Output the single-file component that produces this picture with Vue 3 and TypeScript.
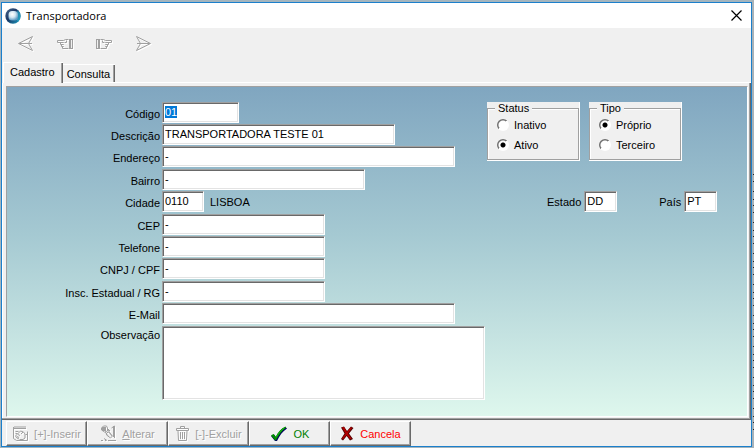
<script setup lang="ts">
import { onMounted, ref } from 'vue'

interface Field {
  id: string
  label: string
  size: string
}

const fields: Field[] = [
  { id: 'codigo', label: 'Código', size: 'w-code' },
  { id: 'descricao', label: 'Descrição', size: 'w-desc' },
  { id: 'endereco', label: 'Endereço', size: 'w-full' },
  { id: 'bairro', label: 'Bairro', size: 'w-bairro' },
  { id: 'cidade', label: 'Cidade', size: 'w-city' },
  { id: 'cep', label: 'CEP', size: 'w-mid' },
  { id: 'telefone', label: 'Telefone', size: 'w-mid' },
  { id: 'cnpj', label: 'CNPJ / CPF', size: 'w-mid' },
  { id: 'insc', label: 'Insc. Estadual / RG', size: 'w-mid' },
  { id: 'email', label: 'E-Mail', size: 'w-full' },
]

const form = ref<Record<string, string>>({
  codigo: '01',
  descricao: 'TRANSPORTADORA TESTE 01',
  endereco: '-',
  bairro: '-',
  cidade: '0110',
  cep: '-',
  telefone: '-',
  cnpj: '-',
  insc: '-',
  email: '',
  obs: '',
  estado: 'DD',
  pais: 'PT',
})
const status = ref('Ativo')
const tipo = ref('Próprio')
const activeTab = ref('Cadastro')

onMounted(() => {
  const first = document.getElementById('codigo') as HTMLInputElement | null
  first?.focus()
  first?.select()
})
</script>

<template>
  <div class="desktop">
    <main class="window">
      <header class="titlebar">
        <svg class="app-icon" width="16" height="16" viewBox="0 0 16 16" aria-hidden="true">
          <defs>
            <linearGradient id="ring" x1="0" y1="0" x2="1" y2="1">
              <stop offset="0" stop-color="#4b6a8c" />
              <stop offset=".45" stop-color="#1a3564" />
              <stop offset="1" stop-color="#1ba3c6" />
            </linearGradient>
            <radialGradient id="core" cx=".4" cy=".35" r=".65">
              <stop offset="0" stop-color="#ffffff" />
              <stop offset=".5" stop-color="#d4e6f1" />
              <stop offset="1" stop-color="#5f9cc4" />
            </radialGradient>
          </defs>
          <circle cx="8" cy="8" r="7.7" fill="url(#ring)" />
          <path d="M12.500 2a7.700 7.700 0 0 1 .5 11.800L11 11l1-6z" fill="#28a5c5" opacity=".7" />
          <rect x="3.500" y="3" width="9.500" height="9.500" rx="3.500" fill="url(#core)" />
        </svg>
        <h1>Transportadora</h1>
        <button class="close" type="button" aria-label="Fechar">
          <svg width="11" height="11" viewBox="0 0 11 11"><path d="M.5.5l10 10M10.500.5l-10 10" stroke="#000" stroke-width="1.200" fill="none" /></svg>
        </button>
      </header>

      <nav class="toolbar">
        <button type="button" disabled aria-label="Primeiro">
          <svg width="18" height="17" viewBox="0 0 18 17"><path d="M15.500 1.500L1.500 8.500l14 7-4-7zM2 8.500h13" /></svg>
        </button>
        <button type="button" disabled aria-label="Anterior">
          <svg width="18" height="17" viewBox="0 0 18 17"><path d="M12.500 4.500h-3l-2 1h-6v2h6M7.500 7.500h-3v2h3M7.500 9.500h-2v2h2M7.500 11.500h-1v2h6M8.500 7.500h2v-2" /><path d="M13 4h4v10h-4z" class="solid" /><path d="M15.500 5v8" class="light" /></svg>
        </button>
        <button type="button" disabled aria-label="Próximo">
          <svg width="18" height="17" viewBox="0 0 18 17"><path d="M5.500 4.500h3l2 1h6v2h-6M10.500 7.500h3v2h-3M10.500 9.500h2v2h-2M10.500 11.500h1v2h-6M9.500 7.500h-2v-2" /><path d="M1 4h4v10H1z" class="solid" /><path d="M2.500 5v8" class="light" /></svg>
        </button>
        <button type="button" disabled aria-label="Último">
          <svg width="18" height="17" viewBox="0 0 18 17"><path d="M2.500 1.500l14 7-14 7 4-7zM16 8.500H3" /></svg>
        </button>
      </nav>

      <div class="tabs" role="tablist">
        <button
          v-for="tab in ['Cadastro', 'Consulta']"
          :key="tab"
          type="button"
          role="tab"
          class="tab"
          :class="{ active: tab === activeTab }"
          :aria-selected="tab === activeTab"
          @click="activeTab = tab"
        >{{ tab }}</button>
        <span class="tab-line"></span>
      </div>

      <section class="page">
        <form class="panel" @submit.prevent>
          <div class="fields">
            <template v-for="f in fields" :key="f.id">
              <label :for="f.id">{{ f.label }}</label>
              <div class="cell">
                <input :id="f.id" v-model="form[f.id]" class="box" :class="f.size" type="text" autocomplete="off" />
                <span v-if="f.id === 'cidade'" class="city">LISBOA</span>
              </div>
            </template>
            <label for="obs" class="obs-label">Observação</label>
            <textarea id="obs" v-model="form.obs" class="box"></textarea>
          </div>

          <div class="side">
            <div class="groups">
              <div class="group">
                <fieldset>
                  <legend>Status</legend>
                  <label v-for="o in ['Inativo', 'Ativo']" :key="o"><input v-model="status" type="radio" name="status" :value="o" />{{ o }}</label>
                </fieldset>
              </div>
              <div class="group">
                <fieldset>
                  <legend>Tipo</legend>
                  <label v-for="o in ['Próprio', 'Terceiro']" :key="o"><input v-model="tipo" type="radio" name="tipo" :value="o" />{{ o }}</label>
                </fieldset>
              </div>
            </div>
            <div class="region">
              <label for="estado">Estado</label>
              <input id="estado" v-model="form.estado" class="box w-short" type="text" />
              <label for="pais" class="pais">País</label>
              <input id="pais" v-model="form.pais" class="box w-short" type="text" />
            </div>
          </div>
        </form>
      </section>

      <footer class="actions">
        <button type="button" disabled>
          <svg class="gray" width="17" height="17" viewBox="0 0 17 17"><path d="M1.500 2v11.500l3 2h11v-9M1 2.500h1M3 1v3M5 1v3M7 1v3M9 1v3M11 1v3M13 1v3M1 3.500h13M3.500 6.500h3M3.500 8.500h2M5 13l-1.500-2 5-5 3 1 1.500 2v4l-2 1.500H7.500M6 9.500l2 1M5 11.500l2 1M9 9l2-2M13.500 9.500h2M7 14l-2-1" /></svg>
          <span>[+]-Inserir</span>
        </button>
        <button type="button" disabled class="wide-gap">
          <svg class="gray" width="17" height="17" viewBox="0 0 17 17"><path d="M1.500 3l2-2h3l1 2v3l-3 1-3-2zM7 3l3 3M5 7l4 5M8 5l4 6M13.500 1v11M11.500 3l3-2v12M6.500 8l2-1 4 4-2 2-4-3zM1 15.500h2M5 15.500h1M8 15.500h8M4 13.500l3 2" /><path d="M2 2h4v4H2z" class="solid" /></svg>
          <span><u>A</u>lterar</span>
        </button>
        <button type="button" disabled>
          <svg class="gray" width="15" height="17" viewBox="0 0 15 17"><path d="M5.500 3V1.500h4V3M1.500 3.500h12v2h-12zM3 6l.5 9.500h8L12 6M5.500 7v7M7.500 7v7M9.500 7v7" /></svg>
          <span><u>[</u>-]-Excluir</span>
        </button>
        <button type="button" class="ok">
          <svg width="18" height="16" viewBox="0 0 18 16"><path d="M1 10l3-1.500 2 2.500C8 7 11 3 15.500 1L17 2.500C12.500 5.500 9.500 9.500 7 15H5z" fill="#000060" /><path d="M1 9.200L3.700 8l2 3C8 6 11 2.500 15.500.500L16 1.700C12 4.500 9 8.500 6 14.200H5z" fill="#008c00" /><path d="M6 11.500C8 8 11 4 14.500 2" stroke="#18b818" fill="none" /></svg>
          <span>OK</span>
        </button>
        <button type="button" class="cancel">
          <svg width="14" height="15" viewBox="0 0 14 15"><path d="M1 1.500L4 .5l3 4.500L11 .5l2.500 1.500L9 7.500l4 5.500-3 1.500L6.700 10 3 14.500 1 13l3.500-5.500z" fill="#500" /><path d="M2 1.500l2-.5 3 5L11 1l1 1-4.200 5.500L11.500 12.500l-1.500.8L6.700 9 3 13.200 2 12.500l3.500-5z" fill="#b00000" /></svg>
          <span>Cancela</span>
        </button>
      </footer>
    </main>
    <svg class="behind" width="2" height="448" viewBox="0 0 2 448" aria-hidden="true">
      <path d="M0 0h2v448H0z" fill="#a8b2b8" />
      <path d="M1.500 174v260" stroke="#222" stroke-dasharray="1 6 1 9 1 7 1 5" fill="none" />
    </svg>
  </div>
</template>

<style>
body {
  background: #a4b5be;
  overflow: hidden;
}
</style>

<style scoped>
* {
  box-sizing: border-box;
}
.desktop {
  display: flex;
  min-height: 100vh;
  padding: 2px 0 1px 1px;
  overflow: hidden;
  font: 11px/14px "Liberation Sans", Arial, sans-serif;
  color: #000;
}
.window {
  flex: 1;
  min-width: 0;
  display: flex;
  flex-direction: column;
  border: 1px solid #1b7fcc;
  background: #f0f0f0;
}
.behind {
  flex: none;
  width: 2px;
  margin: -2px 0 -1px;
}
button {
  font: inherit;
  margin: 0;
  padding: 0;
  border: 0;
  border-radius: 0;
  background: none;
  color: inherit;
}
svg {
  display: block;
  flex: none;
}
.titlebar {
  display: flex;
  align-items: center;
  height: 25px;
  padding: 0 9px 0 3px;
  background: #fff;
}
.titlebar h1 {
  flex: 1;
  margin: 0 0 0 5px;
  font: 11px/16px "Open Sans", "Noto Sans", sans-serif;
}
.toolbar {
  display: flex;
  gap: 21px;
  height: 34px;
  padding: 7px 0 0 15px;
}
.toolbar button {
  width: 18px;
  height: 17px;
}
.toolbar svg,
.gray {
  fill: none;
  stroke: #a0a0a0;
  filter: drop-shadow(1px 1px 0 #fff);
}
.solid {
  fill: #a0a0a0;
  stroke: none;
}
.light {
  stroke: #f0f0f0;
}
.tabs {
  display: flex;
  align-items: flex-end;
  height: 21px;
  padding-left: 1px;
}
.tab {
  height: 19px;
  padding: 0 5px 0 4px;
  border: solid #fff;
  border-width: 1px 0 1px 0;
  box-shadow: inset -1px 0 #696969, inset -2px 0 #a0a0a0;
}
.tab.active {
  height: 21px;
  padding: 0 8px 2px 6px;
  border-width: 1px 0 0 1px;
}
.tab-line {
  flex: 1;
  border-bottom: 1px solid #fff;
}
.page {
  flex: 1;
  display: flex;
  padding: 3px 3px 3px 4px;
  box-shadow: inset -1px -1px #696969, inset -2px -2px #a0a0a0, inset 1px 0 #fff;
}
.panel {
  flex: 1;
  display: flex;
  gap: 2px;
  padding: 15px 0 0;
  border: 1px solid #a0a0a0;
  border-right-color: #fff;
  border-bottom-color: #fff;
  background: linear-gradient(#80a6c0, #a5c9d2 45%, #def7ed);
}
.fields {
  display: grid;
  grid-template-columns: 153px 323px;
  grid-template-rows: repeat(2, 22px) 23px 22px 23px repeat(2, 22px) 23px 22px 23px 74px;
  column-gap: 2px;
  align-content: start;
}
.fields > label {
  padding-top: 5px;
  text-align: right;
}
.fields > .obs-label {
  padding-top: 2px;
}
.cell {
  display: flex;
  align-items: flex-start;
}
.city {
  padding: 4px 0 0 6px;
}
.box {
  height: 21px;
  margin: 0;
  padding: 0 2px 1px;
  border: 1px solid;
  border-color: #a0a0a0 #fff #fff #a0a0a0;
  border-radius: 0;
  outline: 0;
  background: #fff;
  box-shadow: inset 1px 1px #696969, inset -1px -1px #e3e3e3;
  font: inherit;
  color: #000;
  resize: none;
}
.box::selection {
  background: #0078d7;
  color: #fff;
}
textarea.box {
  width: 100%;
  height: 74px;
}
.w-code { width: 77px; }
.w-desc { width: 233px; }
.w-full { width: 293px; }
.w-bairro { width: 203px; }
.w-city { width: 42px; }
.w-mid { width: 163px; }
.w-short { width: 33px; }
.groups {
  display: flex;
  gap: 9px;
}
.group {
  width: 93px;
  height: 59px;
  padding-bottom: 1px;
  background: #f0f0f0;
  box-shadow: inset 0 -1px #fff, inset -1px 0 #fff;
}
fieldset {
  height: 58px;
  min-width: 0;
  margin: 0 1px 0 0;
  padding: 1px 0 0 9px;
  border: 1px solid #a0a0a0;
  box-shadow: inset 1px 1px #fff;
}
legend {
  height: 12px;
  margin-left: -2px;
  padding: 0 3px;
  line-height: 13px;
  background: #f0f0f0;
}
fieldset label {
  display: flex;
  align-items: center;
  gap: 5px;
  height: 20px;
}
fieldset input {
  appearance: none;
  width: 12px;
  height: 12px;
  margin: 0;
  border-radius: 50%;
  background: radial-gradient(circle, #fff 4px, transparent 5px), linear-gradient(135deg, #707070 50%, #fff 50%);
}
fieldset input:checked {
  background: radial-gradient(circle, #000 1px, #000 2px, #fff 3px, #fff 4px, transparent 5px), linear-gradient(135deg, #707070 50%, #fff 50%);
}
.region {
  display: flex;
  gap: 3px;
  padding: 30px 0 0 60px;
}
.region label {
  padding-top: 4px;
}
.region .pais {
  margin-left: 39px;
}
.actions {
  display: flex;
  height: 26px;
  padding: 1px 0 0 4px;
}
.actions button {
  display: flex;
  align-items: center;
  justify-content: center;
  gap: 5px;
  width: 81px;
  height: 25px;
  border: 1px solid;
  border-color: #fff #696969 #696969 #fff;
  box-shadow: inset -1px -1px #a0a0a0;
}
.actions button:disabled {
  color: #a0a0a0;
  text-shadow: 1px 1px #fff;
}
.actions .ok {
  gap: 6px;
  color: #008000;
}
.actions .cancel {
  gap: 6px;
  color: #f00;
}
</style>
